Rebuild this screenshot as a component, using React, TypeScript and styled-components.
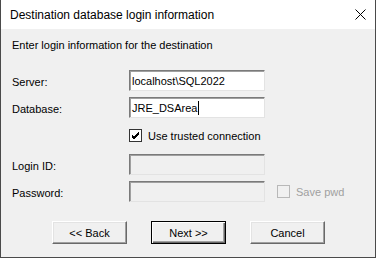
import styled, { createGlobalStyle } from "styled-components";

const GlobalStyle = createGlobalStyle`
  html, body {
    margin: 0;
    padding: 0;
    background: #ffffff;
  }
  * {
    box-sizing: border-box;
  }
`;

function App() {
  return (
    <>
      <GlobalStyle />
      <Window>
        <TitleBar>
          <Title>Destination database login information</Title>
          <CloseButton>
            <svg width="11" height="11" viewBox="0 0 11 11">
              <path d="M0.5 0.5 L10.5 10.5 M10.5 0.5 L0.5 10.5" stroke="#000" strokeWidth="1" />
            </svg>
          </CloseButton>
        </TitleBar>

        <Body>
          <Intro>Enter login information for the destination</Intro>

          <Row $mt={18}>
            <Label>Server:</Label>
            <TextBox>localhost\SQL2022</TextBox>
          </Row>
          <Row $mt={6}>
            <Label>Database:</Label>
            <TextBox>
              JRE_DSArea
              <Caret />
            </TextBox>
          </Row>

          <CheckRow $mt={11}>
            <CheckBox>
              <svg width="9" height="9" viewBox="0 0 9 9">
                <path d="M1 4 L3 6 L8 1 M1 5 L3 7 L8 2 M1 6 L3 8 L8 3" stroke="#000" strokeWidth="1" fill="none" />
              </svg>
            </CheckBox>
            <CheckLabel>Use trusted connection</CheckLabel>
          </CheckRow>

          <Row $mt={12}>
            <Label>Login ID:</Label>
            <TextBox $disabled />
          </Row>
          <Row $mt={6}>
            <Label>Password:</Label>
            <TextBox $disabled />
            <SaveWrap>
              <CheckBox $disabled />
              <CheckLabel $disabled>Save pwd</CheckLabel>
            </SaveWrap>
          </Row>

          <Buttons>
            <Button>&lt;&lt; Back</Button>
            <Button $default>Next &gt;&gt;</Button>
            <Button>Cancel</Button>
          </Buttons>
        </Body>
      </Window>
    </>
  );
}

export default App;

const Window = styled.div`
  width: 376px;
  height: 258px;
  display: flex;
  flex-direction: column;
  border: 1px solid #4a4a4a;
  border-top: none;
  background: #f0f0f0;
  font-family: "Liberation Sans", Arial, sans-serif;
  font-size: 11px;
  color: #000;
`;

const TitleBar = styled.div`
  height: 29px;
  flex: none;
  background: #ffffff;
  display: flex;
  align-items: center;
  justify-content: space-between;
  padding: 0 9px 0 9px;
`;

const Title = styled.div`
  font-size: 12px;
`;

const CloseButton = styled.div`
  width: 11px;
  height: 11px;
  display: flex;
  margin-top: -1px;
`;

const Body = styled.div`
  flex: 1;
  display: flex;
  flex-direction: column;
  padding: 10px 0 0 11px;
`;

const Intro = styled.div`
  line-height: 13px;
`;

const Row = styled.div<{ $mt: number }>`
  display: flex;
  align-items: center;
  margin-top: ${(p) => p.$mt}px;
  height: 21px;
`;

const Label = styled.div`
  width: 117px;
  padding-top: 2px;
`;

const TextBox = styled.div<{ $disabled?: boolean }>`
  width: 136px;
  height: 21px;
  display: flex;
  align-items: center;
  padding: 1px 0 0 2px;
  background: ${(p) => (p.$disabled ? "#f0f0f0" : "#ffffff")};
  border-style: solid;
  border-width: 1px;
  border-color: #7a7a7a #e3e3e3 #e3e3e3 #7a7a7a;
  box-shadow: inset 1px 1px 0 #a0a0a0;
  white-space: nowrap;
`;

const Caret = styled.span`
  display: inline-block;
  width: 1px;
  height: 14px;
  background: #000;
  margin-left: 1px;
`;

const CheckRow = styled.div<{ $mt: number }>`
  display: flex;
  align-items: center;
  margin-top: ${(p) => p.$mt}px;
  margin-left: 117px;
  height: 13px;
`;

const CheckBox = styled.div<{ $disabled?: boolean }>`
  width: 13px;
  height: 13px;
  flex: none;
  display: flex;
  align-items: center;
  justify-content: center;
  background: ${(p) => (p.$disabled ? "#f0f0f0" : "#ffffff")};
  border: 1px solid ${(p) => (p.$disabled ? "#b8b8b8" : "#333333")};
`;

const CheckLabel = styled.span<{ $disabled?: boolean }>`
  margin-left: 6px;
  color: ${(p) => (p.$disabled ? "#a0a0a0" : "#000")};
`;

const SaveWrap = styled.div`
  display: flex;
  align-items: center;
  margin-left: 12px;
`;

const Buttons = styled.div`
  display: flex;
  gap: 24px;
  margin-top: 19px;
  margin-left: 40px;
`;

const Button = styled.div<{ $default?: boolean }>`
  width: 75px;
  height: 23px;
  display: flex;
  align-items: center;
  justify-content: center;
  background: #f0f0f0;
  border-style: solid;
  border-width: 1px;
  border-color: ${(p) =>
    p.$default ? "#000" : "#ffffff #696969 #696969 #ffffff"};
  box-shadow: ${(p) =>
    p.$default
      ? "inset 1px 1px 0 #ffffff, inset -1px -1px 0 #696969, inset -2px -2px 0 #a0a0a0"
      : "inset -1px -1px 0 #a0a0a0, inset 1px 1px 0 #e3e3e3"};
`;
